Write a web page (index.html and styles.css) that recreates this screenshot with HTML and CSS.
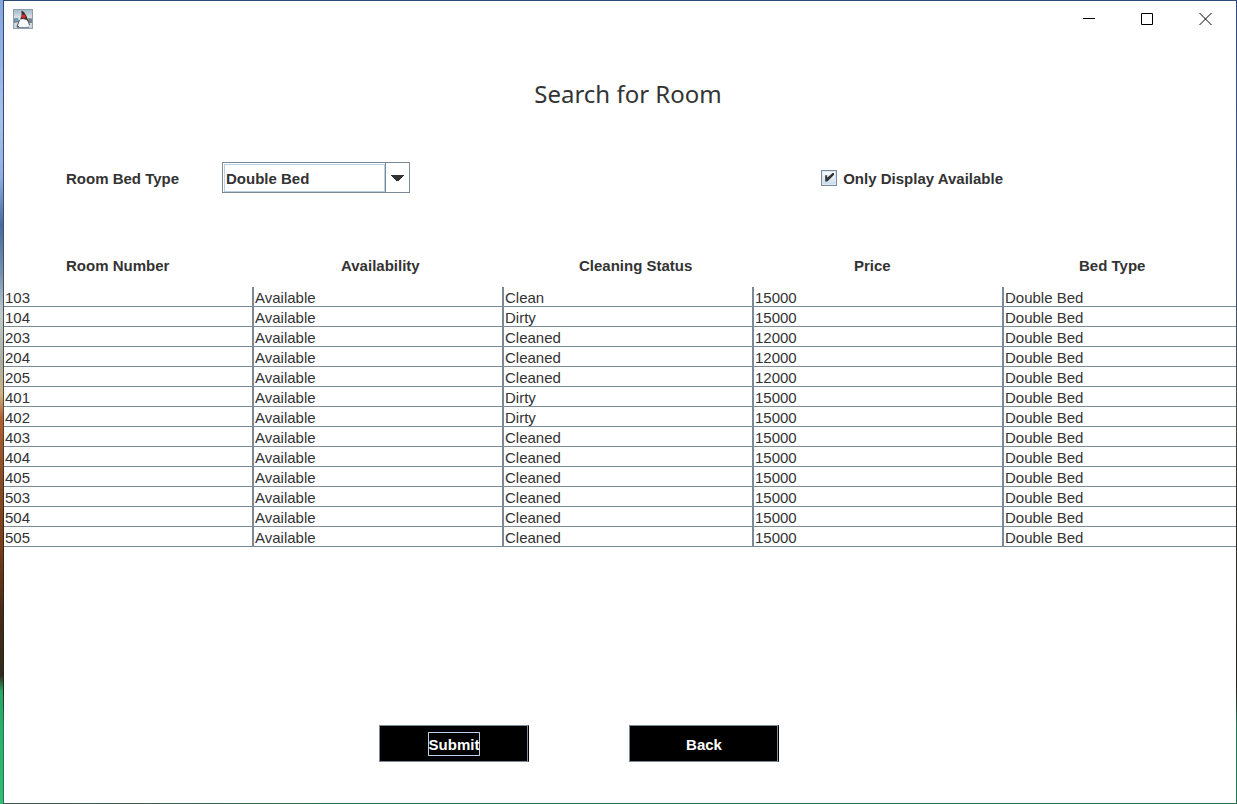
FILE: index.html
```html
<!DOCTYPE html>
<html lang="en">
<head>
<meta charset="utf-8">
<title>Search for Room</title>
<link rel="stylesheet" href="styles.css">
</head>
<body class="desktop">
<div class="frame">
<div class="window">
  <header class="titlebar">
    <svg class="app-icon" viewBox="0 0 20 20" aria-hidden="true">
      <defs><linearGradient id="ig" x1="0" y1="0" x2="0" y2="1"><stop offset="0" stop-color="#a3b8c8"/><stop offset=".5" stop-color="#dfe7ec"/><stop offset="1" stop-color="#c3d0da"/></linearGradient></defs>
      <rect x=".5" y=".5" width="19" height="19" fill="url(#ig)" stroke="#8ea0ae"/>
      <path d="M1 9.500l4-.5 1 4-5 1zM15 9l4 .5v4.500h-3z" fill="#75838e"/>
      <path d="M2 10.500l3-1v2l-3 1z" fill="#5aa5d8"/>
      <path d="M8.500 1.500L11 3l2.500 4 2 5-2 1-7-1 2-5z" fill="#343237"/>
      <path d="M7 10.500l3-.5 4 1 2 5-2 2H6l-1-1z" fill="#f7f8f8"/>
      <path d="M6.500 11L4 17.500h2M15 11l1.500 5" fill="none" stroke="#56565b"/>
      <path d="M4 18.500h12" stroke="#7f8b94"/>
      <circle cx="10.500" cy="7.500" r="2" fill="#e3262c"/>
    </svg>
    <div class="window-controls">
      <button class="control" type="button" aria-label="Minimize"><svg viewBox="0 0 13 13"><path d="M0 6.500h12"/></svg></button>
      <button class="control" type="button" aria-label="Maximize"><svg viewBox="0 0 13 13"><path d="M.5 1.500h11v11h-11z"/></svg></button>
      <button class="control" type="button" aria-label="Close"><svg viewBox="0 0 13 13"><path d="M.5 1l12 12M12.500 1l-12 12"/></svg></button>
    </div>
  </header>
  <h1 class="title">Search for Room</h1>
  <form class="form" id="search">
    <label class="bed-label" for="bed">Room Bed Type</label>
    <div class="combo">
      <select class="combo-select" id="bed"><option>Double Bed</option></select>
      <svg class="combo-arrow" viewBox="0 0 13 6" aria-hidden="true"><path d="M0 0h13v1h-1v1h-1v1h-1v1h-1v1h-1v1h-3v-1h-1v-1h-1v-1h-1v-1h-1v-1h-1z"/></svg>
    </div>
    <label class="check-label"><input class="check" type="checkbox" checked><span class="check-text">Only Display Available</span></label>
  </form>
  <table class="rooms">
    <colgroup><col class="column"><col class="column"><col class="column"><col class="column"><col></colgroup>
    <thead><tr><th class="room">Room Number</th><th class="availability">Availability</th><th>Cleaning Status</th><th class="price">Price</th><th>Bed Type</th></tr></thead>
    <tbody>
      <tr><td>103</td><td>Available</td><td>Clean</td><td>15000</td><td>Double Bed</td></tr>
      <tr><td>104</td><td>Available</td><td>Dirty</td><td>15000</td><td>Double Bed</td></tr>
      <tr><td>203</td><td>Available</td><td>Cleaned</td><td>12000</td><td>Double Bed</td></tr>
      <tr><td>204</td><td>Available</td><td>Cleaned</td><td>12000</td><td>Double Bed</td></tr>
      <tr><td>205</td><td>Available</td><td>Cleaned</td><td>12000</td><td>Double Bed</td></tr>
      <tr><td>401</td><td>Available</td><td>Dirty</td><td>15000</td><td>Double Bed</td></tr>
      <tr><td>402</td><td>Available</td><td>Dirty</td><td>15000</td><td>Double Bed</td></tr>
      <tr><td>403</td><td>Available</td><td>Cleaned</td><td>15000</td><td>Double Bed</td></tr>
      <tr><td>404</td><td>Available</td><td>Cleaned</td><td>15000</td><td>Double Bed</td></tr>
      <tr><td>405</td><td>Available</td><td>Cleaned</td><td>15000</td><td>Double Bed</td></tr>
      <tr><td>503</td><td>Available</td><td>Cleaned</td><td>15000</td><td>Double Bed</td></tr>
      <tr><td>504</td><td>Available</td><td>Cleaned</td><td>15000</td><td>Double Bed</td></tr>
      <tr><td>505</td><td>Available</td><td>Cleaned</td><td>15000</td><td>Double Bed</td></tr>
    </tbody>
  </table>
  <footer class="actions">
    <button class="action" type="submit" form="search"><span class="focused">Submit</span></button>
    <button class="action" type="button"><span>Back</span></button>
  </footer>
</div>
</div>
</body>
</html>
```
FILE: styles.css
```css
* { box-sizing: border-box; }

.desktop {
  margin: 0;
  min-height: 100vh;
  display: flex;
  padding-left: 3px;
  background: linear-gradient(#86a5dc 0%, #a9c0ea 15%, #93aee0 22%, #4b6a9c 28%, #7891ab 34%, #c3cbc6 39%, #a9aea0 45%, #d0b080 49%, #b5602c 52%, #8a4a22 60%, #7b3c18 68%, #4a2a18 76%, #302a1c 84%, #26a866 86%, #31bd76 100%);
  color: #333;
  font: 15px/19px "Liberation Sans", Arial, sans-serif;
}

/* One-pixel window edge, tinted by the desktop behind it */
.frame {
  flex: 1;
  min-width: 0;
  display: flex;
  padding: 1px;
  background:
    linear-gradient(#2b4a78, #2b4a78) top / 100% 1px no-repeat,
    linear-gradient(90deg, #41574f, #24724e 30%) bottom / 100% 1px no-repeat,
    linear-gradient(#2b4a78 0%, #3b5272 35%, #4c4f4b 50%, #2d2a20 64%, #252418 86%, #24724e 90%);
}

.window {
  flex: 1;
  min-width: 0;
  display: flex;
  flex-direction: column;
  background: #fff;
}

.titlebar {
  display: flex;
  justify-content: space-between;
  align-items: center;
  height: 36px;
  padding: 0 2px 0 9px;
}

.app-icon { width: 20px; height: 20px; }

.window-controls { display: flex; }

.control {
  width: 58px;
  height: 36px;
  padding: 0 0 2px;
  border: 0;
  background: none;
}

.control svg {
  display: block;
  width: 13px;
  height: 13px;
  margin: auto;
  fill: none;
  stroke: #000;
}

.title {
  margin: 38px 0 49px 16px;
  text-align: center;
  font: 24px/38px "Noto Sans", "Open Sans", sans-serif;
}

.form {
  display: flex;
  align-items: center;
  padding: 0 233px 0 62px;
  font-weight: bold;
}

.bed-label {
  width: 156px;
  padding-top: 2px;
}

.combo {
  display: grid;
  width: 188px;
  height: 31px;
}

.combo-select {
  grid-area: 1 / 1;
  appearance: none;
  margin: 0;
  padding: 2px 24px 0 3px;
  border: 1px solid #7a8a99;
  border-radius: 0;
  background:
    linear-gradient(#7a8a99, #7a8a99) right 23px top / 1px 100% no-repeat,
    #fff;
  color: #333;
  font: inherit;
}

.combo::before {
  content: "";
  grid-area: 1 / 1;
  z-index: 1;
  margin: 2px 25px 1px 2px;
  border: 1px solid #b8cfe5;
  pointer-events: none;
}

.combo-arrow {
  grid-area: 1 / 1;
  z-index: 1;
  place-self: center end;
  width: 13px;
  height: 6px;
  margin-right: 6px;
  fill: #333;
  shape-rendering: crispEdges;
  pointer-events: none;
}

.check-label {
  display: flex;
  align-items: center;
  gap: 6px;
  margin-left: auto;
}

.check-text { padding-top: 2px; }

.check {
  appearance: none;
  display: grid;
  width: 16px;
  height: 16px;
  margin: 0;
  border: 1px solid #7a8a99;
  background: linear-gradient(#fff, #c4d9ec);
  box-shadow: inset 0 0 0 1px #dce8f3;
}

.check:checked::after {
  content: "";
  margin: 2px 2px 3px 3px;
  background: #333;
  clip-path: polygon(0 30%, 22% 30%, 22% 58%, 88% 0, 100% 0, 100% 24%, 24% 100%, 0 100%);
}

.rooms {
  width: 100%;
  margin-top: 63px;
  table-layout: fixed;
  border-collapse: separate;
  border-spacing: 0;
  text-align: left;
}

.column { width: 250px; }

th {
  height: 31px;
  padding: 0 0 12px 75px;
}

.room { padding-left: 62px; }
.availability { padding-left: 87px; }
.price { padding-left: 100px; }

td {
  height: 20px;
  padding: 2px 1px 0;
  border-bottom: 1px solid #7a8a99;
  line-height: 17px;
}

td:not(:last-child) { border-right: 2px solid #7a8a99; }

.actions {
  display: flex;
  gap: 100px;
  margin-top: auto;
  padding: 0 0 41px 375px;
}

.action {
  width: 150px;
  height: 37px;
  padding: 0;
  border: 1px solid #7a8a99;
  border-right: 1px solid #000;
  background: #000;
  box-shadow: inset -1px 0 #7a8a99;
  color: #fff;
  font: bold 15px/21px "Liberation Sans", Arial, sans-serif;
}

.action span { display: inline-block; padding-top: 2px; }

.action .focused {
  padding: 1px 0 0;
  border: 1px solid #b8cfe5;
}
```
